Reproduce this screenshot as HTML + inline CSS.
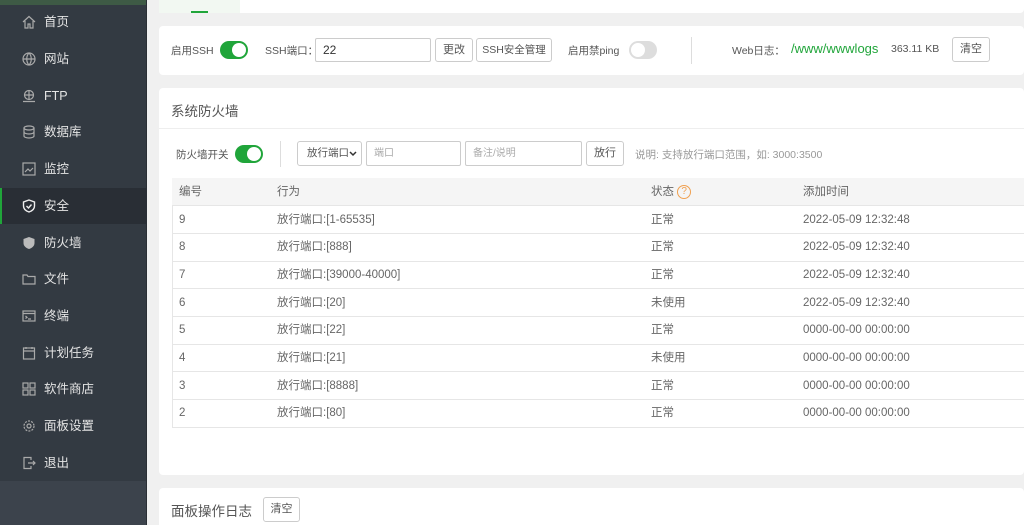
<!DOCTYPE html>
<html><head><meta charset="utf-8"><style>
*{margin:0;padding:0;box-sizing:border-box}
html,body{width:1024px;height:525px;overflow:hidden}
body{background:#f0f0f0;font-family:"Liberation Sans","Noto Sans CJK SC",sans-serif;font-size:11px;color:#555;position:relative}
.a{position:absolute;white-space:nowrap}
#side{left:0;top:0;width:147px;height:525px;background:#3c434c}
#menu{left:0;top:5px;width:147px;height:476px;background:#333a42}
#top{left:0;top:0;width:147px;height:5px;background:#3e5a45}
.mi{position:absolute;left:0;width:147px;height:36px;color:#e4e4e4;font-size:12.5px;line-height:36px;padding-left:44px}
.mi svg{position:absolute;left:22px;top:11px}
.sel{background:#292e35}
.sel:before{content:"";position:absolute;left:0;top:0;width:2px;height:36px;background:#20a53a}
.card{position:absolute;background:#fff;border-radius:4px}
.btn{position:absolute;border:1px solid #ccc;border-radius:3px;background:#fff;color:#555;font-size:11px;text-align:center;white-space:nowrap}
.inp{position:absolute;border:1px solid #ccc;border-radius:2px;background:#fff;padding-left:7px;font-size:11px}
.sw{position:absolute;width:28px;height:18px;border-radius:9px;background:#20a53a}
.sw:after{content:"";position:absolute;right:2px;top:2px;width:14px;height:14px;border-radius:50%;background:#fff}
.sw.off{background:#ddd}
.sw.off:after{left:2px;right:auto}
table{position:absolute;left:172px;top:178px;width:852px;border-collapse:collapse;font-size:11.5px}
td{height:27.7px;border-bottom:1px solid #e6e6e6;color:#666;padding:0;line-height:24px;vertical-align:middle}
tr.h td{background:#f5f5f5;color:#666}
</style></head><body>
<div class="a" id="side"></div>
<div class="a" id="menu"></div>
<div class="a" id="top"></div>
<div class="a" style="left:146px;top:0;width:1px;height:525px;background:#2a2f35"></div>

<div class="mi" style="top:4px"><svg width="14" height="14" viewBox="0 0 14 14" fill="none" stroke="#aaa" stroke-width="1.2"><path d="M1 7L7 1.5 13 7M3 6v7h3v-4h2v4h3V6"/></svg>首页</div>
<div class="mi" style="top:41px"><svg width="14" height="14" viewBox="0 0 14 14" fill="none" stroke="#aaa" stroke-width="1.2"><circle cx="7" cy="7" r="6"/><path d="M1 7h12M7 1c-3 3-3 9 0 12M7 1c3 3 3 9 0 12"/></svg>网站</div>
<div class="mi" style="top:78px"><svg width="14" height="14" viewBox="0 0 14 14" fill="none" stroke="#aaa" stroke-width="1.2"><circle cx="7" cy="6" r="4.5"/><path d="M2.5 6h9M7 1.5v9M1 12.5h12"/></svg>FTP</div>
<div class="mi" style="top:114px"><svg width="14" height="14" viewBox="0 0 14 14" fill="none" stroke="#aaa" stroke-width="1.2"><ellipse cx="7" cy="3" rx="5" ry="2"/><path d="M2 3v8c0 1 2 2 5 2s5-1 5-2V3M2 7c0 1 2 2 5 2s5-1 5-2"/></svg>数据库</div>
<div class="mi" style="top:151px"><svg width="14" height="14" viewBox="0 0 14 14" fill="none" stroke="#aaa" stroke-width="1.2"><rect x="1" y="1" width="12" height="12"/><path d="M3 10l3-3 2 2 3-3"/></svg>监控</div>
<div class="mi sel" style="top:188px"><svg width="14" height="14" viewBox="0 0 14 14" fill="none" stroke="#eee" stroke-width="1.4"><path d="M7 1l5.5 2v4c0 3-2.5 5-5.5 6C4 12 1.5 10 1.5 7V3z"/><path d="M4.5 7l2 2 3-3.5"/></svg>安全</div>
<div class="mi" style="top:225px"><svg width="14" height="14" viewBox="0 0 14 14" fill="#bbb"><path d="M7 1l5.5 2v4c0 3-2.5 5-5.5 6C4 12 1.5 10 1.5 7V3z"/></svg>防火墙</div>
<div class="mi" style="top:261px"><svg width="14" height="14" viewBox="0 0 14 14" fill="none" stroke="#aaa" stroke-width="1.2"><path d="M1 3h4l1 1.5h7V12H1z"/></svg>文件</div>
<div class="mi" style="top:298px"><svg width="14" height="14" viewBox="0 0 14 14" fill="none" stroke="#aaa" stroke-width="1.2"><rect x="1" y="2" width="12" height="10"/><path d="M1 4.5h12M3.5 7l1.5 1.3-1.5 1.2M6 10h3"/></svg>终端</div>
<div class="mi" style="top:335px"><svg width="14" height="14" viewBox="0 0 14 14" fill="none" stroke="#aaa" stroke-width="1.2"><rect x="1.5" y="2" width="11" height="11"/><path d="M1.5 5h11M4 1v2M10 1v2"/></svg>计划任务</div>
<div class="mi" style="top:371px"><svg width="14" height="14" viewBox="0 0 14 14" fill="none" stroke="#aaa" stroke-width="1.2"><rect x="1" y="1" width="5" height="5"/><rect x="8" y="1" width="5" height="5"/><rect x="1" y="8" width="5" height="5"/><rect x="8" y="8" width="5" height="5"/></svg>软件商店</div>
<div class="mi" style="top:408px"><svg width="14" height="14" viewBox="0 0 14 14" fill="none" stroke="#aaa" stroke-width="1.2"><circle cx="7" cy="7" r="2"/><circle cx="7" cy="7" r="5" stroke-dasharray="2 1.2"/></svg>面板设置</div>
<div class="mi" style="top:445px"><svg width="14" height="14" viewBox="0 0 14 14" fill="none" stroke="#aaa" stroke-width="1.2"><path d="M9 4V1.5H2v11h7V10M6 7h7M11 5l2 2-2 2"/></svg>退出</div>

<div class="card" style="left:159px;top:-4px;width:865px;height:17px;border-radius:0 0 4px 4px"></div>
<div class="a" style="left:159px;top:0;width:81px;height:13px;background:#f2f8f2"></div>
<div class="a" style="left:191px;top:11px;width:17px;height:2px;background:#20a53a"></div>

<div class="card" style="left:159px;top:26px;width:865px;height:49px"></div>
<div class="a" style="left:171px;top:43px;font-size:10.5px">启用SSH</div>
<div class="sw" style="left:220px;top:41px"></div>
<div class="a" style="left:265px;top:43px;font-size:10.5px">SSH端口：</div>
<div class="inp" style="left:315px;top:38px;width:116px;height:24px;line-height:22px;color:#333;font-size:12px">22</div>
<div class="btn" style="left:435px;top:38px;width:38px;height:24px;line-height:22px">更改</div>
<div class="btn" style="left:476px;top:38px;width:76px;height:24px;line-height:22px;font-size:10.5px">SSH安全管理</div>
<div class="a" style="left:568px;top:43px;font-size:10.5px">启用禁ping</div>
<div class="sw off" style="left:629px;top:41px"></div>
<div class="a" style="left:691px;top:37px;width:1px;height:27px;background:#ddd"></div>
<div class="a" style="left:732px;top:43px;font-size:10.5px">Web日志：</div>
<div class="a" style="left:791px;top:41px;color:#20a53a;font-size:13px">/www/wwwlogs</div>
<div class="a" style="left:891px;top:43px;font-size:10.5px">363.11 KB</div>
<div class="btn" style="left:952px;top:37px;width:38px;height:25px;line-height:23px">清空</div>

<div class="card" style="left:159px;top:88px;width:865px;height:387px"></div>
<div class="a" style="left:171px;top:100px;font-size:13.5px;color:#555">系统防火墙</div>
<div class="a" style="left:159px;top:128px;width:865px;height:1px;background:#eee"></div>
<div class="a" style="left:176px;top:147px;font-size:10.5px">防火墙开关</div>
<div class="sw" style="left:235px;top:145px"></div>
<div class="a" style="left:280px;top:141px;width:1px;height:26px;background:#ddd"></div>
<div class="btn" style="left:297px;top:141px;width:65px;height:25px;line-height:23px;text-align:left;padding-left:9px;font-size:10.5px">放行端口<svg style="position:absolute;right:4px;top:9px" width="8" height="6" viewBox="0 0 8 6"><path d="M1 1l3 3 3-3" fill="none" stroke="#333" stroke-width="1.5"/></svg></div>
<div class="inp" style="left:366px;top:141px;width:95px;height:25px;line-height:23px;color:#aaa;font-size:10px">端口</div>
<div class="inp" style="left:465px;top:141px;width:117px;height:25px;line-height:23px;color:#aaa;font-size:10px">备注/说明</div>
<div class="btn" style="left:586px;top:141px;width:38px;height:25px;line-height:23px">放行</div>
<div class="a" style="left:635px;top:147px;color:#999;font-size:10.5px">说明: 支持放行端口范围，如: 3000:3500</div>

<div class="a" style="left:172px;top:178px;width:1px;height:249px;background:#e6e6e6"></div>
<table>
<tr class="h"><td style="width:98px;padding-left:7px">编号</td><td style="width:374px;padding-left:7px">行为</td><td style="width:151px;padding-left:7px">状态 <span style="display:inline-block;width:14px;height:14px;border:1.2px solid #f0a050;border-radius:50%;color:#f0a050;font-size:10px;text-align:center;line-height:12px;vertical-align:middle">?</span></td><td style="padding-left:8px">添加时间</td></tr>
<tr><td style="padding-left:7px">9</td><td style="padding-left:7px">放行端口:[1-65535]</td><td style="padding-left:7px">正常</td><td style="padding-left:8px">2022-05-09 12:32:48</td></tr>
<tr><td style="padding-left:7px">8</td><td style="padding-left:7px">放行端口:[888]</td><td style="padding-left:7px">正常</td><td style="padding-left:8px">2022-05-09 12:32:40</td></tr>
<tr><td style="padding-left:7px">7</td><td style="padding-left:7px">放行端口:[39000-40000]</td><td style="padding-left:7px">正常</td><td style="padding-left:8px">2022-05-09 12:32:40</td></tr>
<tr><td style="padding-left:7px">6</td><td style="padding-left:7px">放行端口:[20]</td><td style="padding-left:7px">未使用</td><td style="padding-left:8px">2022-05-09 12:32:40</td></tr>
<tr><td style="padding-left:7px">5</td><td style="padding-left:7px">放行端口:[22]</td><td style="padding-left:7px">正常</td><td style="padding-left:8px">0000-00-00 00:00:00</td></tr>
<tr><td style="padding-left:7px">4</td><td style="padding-left:7px">放行端口:[21]</td><td style="padding-left:7px">未使用</td><td style="padding-left:8px">0000-00-00 00:00:00</td></tr>
<tr><td style="padding-left:7px">3</td><td style="padding-left:7px">放行端口:[8888]</td><td style="padding-left:7px">正常</td><td style="padding-left:8px">0000-00-00 00:00:00</td></tr>
<tr><td style="padding-left:7px">2</td><td style="padding-left:7px">放行端口:[80]</td><td style="padding-left:7px">正常</td><td style="padding-left:8px">0000-00-00 00:00:00</td></tr>
</table>

<div class="card" style="left:159px;top:488px;width:865px;height:37px;border-radius:4px 4px 0 0"></div>
<div class="a" style="left:171px;top:500px;font-size:13.5px;color:#555">面板操作日志</div>
<div class="btn" style="left:263px;top:497px;width:37px;height:25px;line-height:23px">清空</div>
</body></html>
